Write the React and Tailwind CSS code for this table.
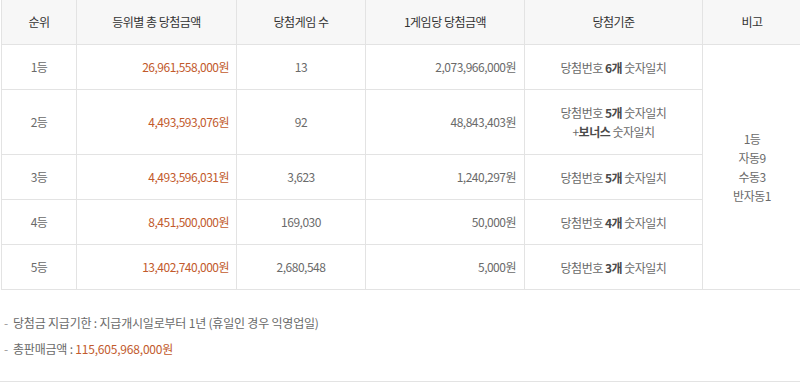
import React from 'react';

const rows = [
  { rank: '1등', total: '26,961,558,000원', count: '13', per: '2,073,966,000원', n: '6' },
  { rank: '2등', total: '4,493,593,076원', count: '92', per: '48,843,403원', n: '5', bonus: true },
  { rank: '3등', total: '4,493,596,031원', count: '3,623', per: '1,240,297원', n: '5' },
  { rank: '4등', total: '8,451,500,000원', count: '169,030', per: '50,000원', n: '4' },
  { rank: '5등', total: '13,402,740,000원', count: '2,680,548', per: '5,000원', n: '3' },
];

const cell = 'border border-[#e3e3e3] text-[12px] text-[#6a6a6a] p-0';

export default function App() {
  return (
    <div className="w-[800px] h-[383px] overflow-hidden bg-white" style={{ fontFamily: '"Noto Sans CJK KR", "Noto Sans", sans-serif' }}>
      <table className="table-fixed border-collapse w-[800px] ml-px -mt-px tracking-[-0.5px]">
        <colgroup>
          <col className="w-[75px]" />
          <col className="w-[160px]" />
          <col className="w-[129px]" />
          <col className="w-[159px]" />
          <col className="w-[178px]" />
          <col className="w-[99px]" />
        </colgroup>
        <thead>
          <tr className="h-[45px] bg-[#f7f7f7]">
            {['순위', '등위별 총 당첨금액', '당첨게임 수', '1게임당 당첨금액', '당첨기준', '비고'].map((h) => (
              <th key={h} className={`${cell} font-normal text-[#333] text-center`}>{h}</th>
            ))}
          </tr>
        </thead>
        <tbody>
          {rows.map((r, i) => (
            <tr key={r.rank} className={r.bonus ? 'h-[65px]' : 'h-[45px]'}>
              <td className={`${cell} text-center`}>{r.rank}</td>
              <td className={`${cell} text-right pr-[7px] text-[#c25a2c]`}>{r.total}</td>
              <td className={`${cell} text-center`}>{r.count}</td>
              <td className={`${cell} text-right pr-[8px]`}>{r.per}</td>
              <td className={`${cell} text-center leading-[19px]`}>
                당첨번호 <b className="font-bold text-[#4a4a4a]">{r.n}개</b> 숫자일치
                {r.bonus && (
                  <>
                    <br />+<b className="font-bold text-[#4a4a4a]">보너스</b> 숫자일치
                  </>
                )}
              </td>
              {i === 0 && (
                <td rowSpan={5} className={`${cell} text-center whitespace-nowrap leading-[19px]`}>
                  1등<br />자동9<br />수동3<br />반자동1
                </td>
              )}
            </tr>
          ))}
        </tbody>
      </table>
      <ul className="mt-[20px] text-[12px] text-[#6a6a6a] tracking-[-0.2px]">
        <li className="flex h-[26px] items-center">
          <span className="w-[13px] pl-[4px] text-[#999]">-</span>
          <span>당첨금 지급기한 : 지급개시일로부터 1년 (휴일인 경우 익영업일)</span>
        </li>
        <li className="flex h-[26px] items-center">
          <span className="w-[13px] pl-[4px] text-[#999]">-</span>
          <span>총판매금액 : <span className="text-[#c25a2c]">115,605,968,000원</span></span>
        </li>
      </ul>
      <div className="mt-[19px] border-t border-[#e3e3e3]" />
    </div>
  );
}
